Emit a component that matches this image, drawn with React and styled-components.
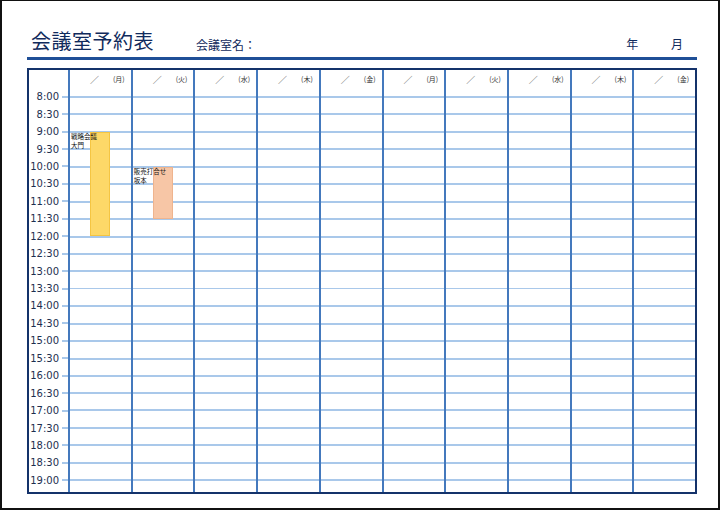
import React from 'react';
import styled, { createGlobalStyle } from 'styled-components';

const Global = createGlobalStyle`
  html, body { margin: 0; padding: 0; background: #fff; }
  body { font-family: "Noto Sans CJK JP", "Liberation Sans", sans-serif; }
`;

const ROW = 17.45;
const times = [];
for (let h = 8; h <= 19; h++) {
  times.push(`${h}:00`);
  if (h < 19) times.push(`${h}:30`);
}
const days = ['月', '火', '水', '木', '金', '月', '火', '水', '木', '金'];

const events = {
  0: { label: ['戦略会議', '大門'], from: 2, to: 8, color: '#fdd868', edge: '#f5c542' },
  1: { label: ['販売打合せ', '坂本'], from: 4, to: 7, color: '#f7c6a6', edge: '#efb48e' },
};

const Page = styled.div`
  width: 720px;
  height: 510px;
  box-sizing: border-box;
  border: 2px solid #111;
  border-top: 1px solid #111;
  padding: 0 21px 0 25px;
  display: flex;
  flex-direction: column;
`;

const Header = styled.div`
  height: 56px;
  display: flex;
  align-items: flex-end;
  border-bottom: 3px solid #1f4f97;
  padding: 0 14px 0 4px;
  color: #102a5c;
`;

const Title = styled.h1`
  margin: 0 0 2px;
  font-size: 20px;
  font-weight: 400;
  letter-spacing: 0.5px;
`;

const RoomName = styled.span`
  margin: 0 0 4px 42px;
  font-size: 12px;
  flex: 1;
`;

const YearMonth = styled.span`
  font-size: 12px;
  margin-bottom: 5px;
  word-spacing: 30px;
`;

const Table = styled.div`
  margin-top: 8px;
  height: 426px;
  box-sizing: border-box;
  border: 2px solid #14326a;
  display: flex;
`;

const TimeCol = styled.div`
  width: 39px;
  display: flex;
  flex-direction: column;
`;

const DayCol = styled.div`
  flex: 1;
  border-left: 2px solid #4479bd;
  display: flex;
  flex-direction: column;
  position: relative;
`;

const HeadCell = styled.div`
  height: 18px;
  display: flex;
  justify-content: flex-end;
  align-items: center;
  gap: 14px;
  padding-right: 6px;
  font-size: 7px;
  color: #333;
`;

const Slash = styled.span`
  font-size: 9px;
  color: #555;
`;

const Body = styled.div`
  display: flex;
  flex-direction: column;
`;

const Row = styled.div`
  height: ${ROW}px;
  background: linear-gradient(#fff 0, #fff calc(50% - 1px), #a9c8ea calc(50% - 1px), #a9c8ea calc(50% + 1px), #fff calc(50% + 1px));
`;

const TimeRow = styled.div`
  height: ${ROW}px;
  display: flex;
  align-items: center;
  justify-content: flex-end;
  font-family: "DejaVu Sans", "Liberation Sans", sans-serif;
  font-size: 10px;
  color: #1d2f4f;
  &::after {
    content: '';
    width: 6px;
    height: 2px;
    margin-left: 3px;
    background: #a9c8ea;
  }
`;

const EventBar = styled.div`
  position: absolute;
  left: 20px;
  width: 20px;
  background: ${(p) => p.$color};
  border: 1px solid ${(p) => p.$edge};
  box-sizing: border-box;
`;

const EventLabel = styled.div`
  position: absolute;
  left: 1px;
  font-size: 6.5px;
  line-height: 9px;
  color: #111;
  white-space: nowrap;
`;

export default function App() {
  const top = (i) => 18 + ROW * i + ROW / 2;
  return (
    <>
      <Global />
      <Page>
        <Header>
          <Title>会議室予約表</Title>
          <RoomName>会議室名：</RoomName>
          <YearMonth>年 月</YearMonth>
        </Header>
        <Table>
          <TimeCol>
            <HeadCell />
            <Body>
              {times.map((t) => (
                <TimeRow key={t}>{t}</TimeRow>
              ))}
            </Body>
          </TimeCol>
          {days.map((d, i) => {
            const ev = events[i];
            return (
              <DayCol key={i}>
                <HeadCell>
                  <Slash>／</Slash>
                  <span>({d})</span>
                </HeadCell>
                <Body>
                  {times.map((t) => (
                    <Row key={t} />
                  ))}
                </Body>
                {ev && (
                  <>
                    <EventBar
                      $color={ev.color}
                      $edge={ev.edge}
                      style={{ top: top(ev.from), height: top(ev.to) - top(ev.from) }}
                    />
                    <EventLabel style={{ top: top(ev.from) }}>
                      {ev.label[0]}
                      <br />
                      {ev.label[1]}
                    </EventLabel>
                  </>
                )}
              </DayCol>
            );
          })}
        </Table>
      </Page>
    </>
  );
}
